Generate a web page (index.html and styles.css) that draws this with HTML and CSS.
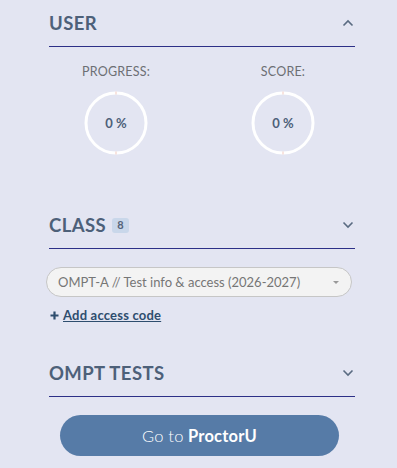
FILE: index.html
```html
<!DOCTYPE html>
<html>
<head>
<meta charset="utf-8">
<link rel="stylesheet" href="styles.css">
</head>
<body>
<div class="panel">
  <section class="section">
    <div class="head">
      <h2 class="title">USER</h2>
      <svg class="chev" width="12" height="8" viewBox="0 0 12 8"><path d="M1.5 6.5 L6 2 L10.5 6.5" fill="none" stroke="#5a6b82" stroke-width="1.6"/></svg>
    </div>
    <div class="stats">
      <div class="stat">
        <div class="label">PROGRESS:</div>
        <div class="ring"><svg width="64" height="64" viewBox="0 0 64 64"><circle cx="32" cy="32" r="30" fill="none" stroke="#fff" stroke-width="3"/><rect x="31.5" y="0.5" width="1" height="3" fill="#f3c9c0"/><rect x="31.5" y="60.5" width="1" height="3" fill="#f3c9c0"/></svg><span class="pct">0 %</span></div>
      </div>
      <div class="stat">
        <div class="label">SCORE:</div>
        <div class="ring"><svg width="64" height="64" viewBox="0 0 64 64"><circle cx="32" cy="32" r="30" fill="none" stroke="#fff" stroke-width="3"/><rect x="31.5" y="0.5" width="1" height="3" fill="#f3c9c0"/><rect x="31.5" y="60.5" width="1" height="3" fill="#f3c9c0"/></svg><span class="pct">0 %</span></div>
      </div>
    </div>
  </section>
  <section class="section">
    <div class="head">
      <h2 class="title">CLASS <span class="badge">8</span></h2>
      <svg class="chev" width="12" height="8" viewBox="0 0 12 8"><path d="M1.5 1.5 L6 6 L10.5 1.5" fill="none" stroke="#5a6b82" stroke-width="1.6"/></svg>
    </div>
  </section>
  <div class="select-wrap">
    <div class="select"><span>OMPT-A // Test info &amp; access (2026-2027)</span><span class="caret"></span></div>
    <a class="add" href="#"><svg class="plus" width="9" height="9" viewBox="0 0 9 9"><path d="M4.5 0.5 V8.5 M0.5 4.5 H8.5" stroke="#2e4d6e" stroke-width="2.2"/></svg><span class="add-text">Add access code</span></a>
  </div>
  <section class="section tests-sec">
    <div class="head">
      <h2 class="title">OMPT TESTS</h2>
      <svg class="chev" width="12" height="8" viewBox="0 0 12 8"><path d="M1.5 1.5 L6 6 L10.5 1.5" fill="none" stroke="#5a6b82" stroke-width="1.6"/></svg>
    </div>
  </section>
  <div class="btn-row"><button class="btn"><span class="light">Go to</span> <b>ProctorU</b></button></div>
</div>
</body>
</html>
```
FILE: styles.css
```css
html, body { margin: 0; padding: 0; }
body {
  background: #e3e5f2;
  font-family: Lato, "Open Sans", sans-serif;
  width: 397px;
  height: 468px;
  overflow: hidden;
}
.panel { padding: 0 42px 0 49px; }
.head {
  display: flex;
  align-items: center;
  justify-content: space-between;
  padding: 12px 0 12px;
  border-bottom: 1.5px solid #2d3087;
}
.title {
  margin: 0;
  font-size: 18.5px;
  line-height: 22px;
  font-weight: 700;
  color: #4d6079;
  letter-spacing: 0.4px;
  display: flex;
  align-items: center;
}
.chev { margin-right: 1px; }
.stats {
  display: flex;
  justify-content: space-between;
  padding: 18px 17px 0 12px;
  height: 155px;
  box-sizing: border-box;
}
.stat { width: 110px; display: flex; flex-direction: column; align-items: center; }
.label { font-size: 12.5px; color: #6c6f74; letter-spacing: 0.2px; line-height: 14px; font-weight: 400; }
.ring { position: relative; width: 64px; height: 64px; margin-top: 12px; }
.ring svg { display: block; }
.pct {
  position: absolute; left: 0; top: 0; width: 64px; height: 64px;
  display: flex; align-items: center; justify-content: center;
  font-size: 13px; font-weight: 700; color: #4d6079;
}
.badge {
  display: inline-flex; align-items: center; justify-content: center;
  width: 17px; height: 15px; border-radius: 3px; margin-left: 6px;
  background: #c9d7ea; color: #56647a; font-size: 11px; font-weight: 700;
  letter-spacing: 0;
}
.select-wrap { margin-left: -3px; margin-right: 3px; padding-top: 18px; height: 101px; box-sizing: border-box; }
.select {
  height: 30px; border: 1px solid #c6c6c6; border-radius: 15px;
  background: #f3f3f3; box-sizing: border-box;
  display: flex; align-items: center; justify-content: space-between;
  padding: 0 12px 0 11px;
  font-size: 13px; color: #767676;
}
.caret {
  width: 0; height: 0; border-left: 3px solid transparent; border-right: 3px solid transparent;
  border-top: 3px solid #999;
}
.add {
  display: inline-flex; align-items: center; margin: 10px 0 0 4px;
  color: #2e4d6e; text-decoration: none; font-size: 13px; font-weight: 700;
  letter-spacing: 0.2px;
}
.plus { margin-right: 4px; }
.add-text { text-decoration: underline; }
.btn-row { padding: 18px 16px 0 11px; }
.btn {
  width: 100%; height: 41px; border: none; border-radius: 21px;
  background: #567ba7; color: #fff; font-family: inherit; font-size: 16.5px;
  font-weight: 400; letter-spacing: 0.2px;
}
.btn .light { font-weight: 300; }
.btn b { font-weight: 700; }
```
